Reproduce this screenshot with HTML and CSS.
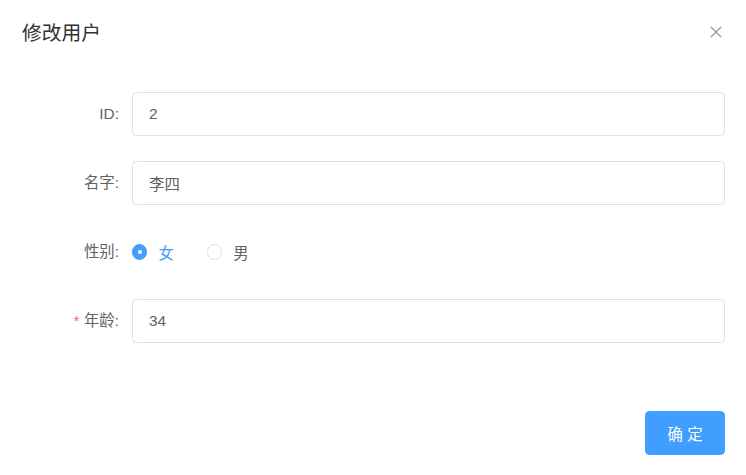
FILE: index.html
```html
<!DOCTYPE html>
<html lang="zh-CN">
<head>
<meta charset="utf-8">
<title>修改用户</title>
<link rel="stylesheet" href="styles.css">
</head>
<body>
<div class="dialog">
  <div class="dialog-header">
    <span class="dialog-title">修改用户</span>
    <button class="dialog-close" type="button" aria-label="Close">
      <svg viewBox="0 0 18 18" width="18" height="18"><path d="M4 4 L14 14 M14 4 L4 14" stroke="#909399" stroke-width="1.2" fill="none"/></svg>
    </button>
  </div>
  <div class="dialog-body">
    <form class="form">
      <div class="form-item">
        <label class="form-label">ID:</label>
        <div class="form-content"><input class="input" type="text" value="2"></div>
      </div>
      <div class="form-item">
        <label class="form-label">名字:</label>
        <div class="form-content"><input class="input" type="text" value="李四"></div>
      </div>
      <div class="form-item">
        <label class="form-label">性别:</label>
        <div class="form-content radio-group">
          <span class="radio checked"><span class="radio-inner"></span><span class="radio-label">女</span></span>
          <span class="radio"><span class="radio-inner"></span><span class="radio-label">男</span></span>
        </div>
      </div>
      <div class="form-item">
        <label class="form-label required">年龄:</label>
        <div class="form-content"><input class="input" type="text" value="34"></div>
      </div>
    </form>
  </div>
  <div class="dialog-footer">
    <button class="btn-primary" type="button">确 定</button>
  </div>
</div>
</body>
</html>
```

FILE: styles.css
```css
* { box-sizing: border-box; }
html, body {
  margin: 0;
  padding: 0;
  background: #fff;
}
body {
  font-family: "Liberation Sans", "Noto Sans CJK SC", sans-serif;
  color: #606266;
}
.dialog {
  position: relative;
  width: 746px;
  height: 475px;
  background: #fff;
}
.dialog-header {
  padding: 20px 22px 13px;
}
.dialog-title {
  display: block;
  font-size: 19.8px;
  line-height: 26px;
  color: #303133;
}
.dialog-close {
  position: absolute;
  top: 23px;
  right: 21px;
  width: 18px;
  height: 18px;
  padding: 0;
  border: none;
  background: transparent;
  display: flex;
}
.dialog-body {
  padding: 33px 21px 33px 22px;
}
.form {
  display: flex;
  flex-direction: column;
  gap: 25px;
  margin-bottom: 25px;
}
.form-item {
  display: flex;
  height: 44px;
}
.form-label {
  width: 110px;
  flex: none;
  padding-right: 13px;
  text-align: right;
  font-size: 15.4px;
  line-height: 44px;
  color: #606266;
}
.form-label.required::before {
  content: "*";
  color: #f56c6c;
  margin-right: 4.4px;
}
.form-content {
  flex: 1;
  display: flex;
  align-items: center;
}
.input {
  width: 100%;
  height: 44px;
  border: 1px solid #dcdfe6;
  border-radius: 4.4px;
  padding: 0 16px;
  font-family: inherit;
  font-size: 15.4px;
  color: #606266;
  outline: none;
  background: #fff;
}
.radio-group {
  gap: 33px;
}
.radio {
  display: inline-flex;
  align-items: center;
  font-size: 15.4px;
  color: #606266;
}
.radio-inner {
  width: 15.4px;
  height: 15.4px;
  border: 1px solid #dcdfe6;
  border-radius: 50%;
  background: #fff;
  position: relative;
}
.radio.checked .radio-inner {
  border-color: #409eff;
  background: #409eff;
}
.radio.checked .radio-inner::after {
  content: "";
  position: absolute;
  left: 50%;
  top: 50%;
  width: 4.4px;
  height: 4.4px;
  margin: -2.2px 0 0 -2.2px;
  border-radius: 50%;
  background: #fff;
}
.radio-label {
  padding-left: 11px;
}
.radio.checked .radio-label {
  color: #409eff;
}
.dialog-footer {
  display: flex;
  justify-content: flex-end;
  padding: 10px 21px 20px;
}
.btn-primary {
  width: 80px;
  height: 44px;
  border: 1px solid #409eff;
  border-radius: 4.4px;
  background: #409eff;
  color: #fff;
  font-family: inherit;
  font-size: 15.4px;
  padding: 0;
}
```
